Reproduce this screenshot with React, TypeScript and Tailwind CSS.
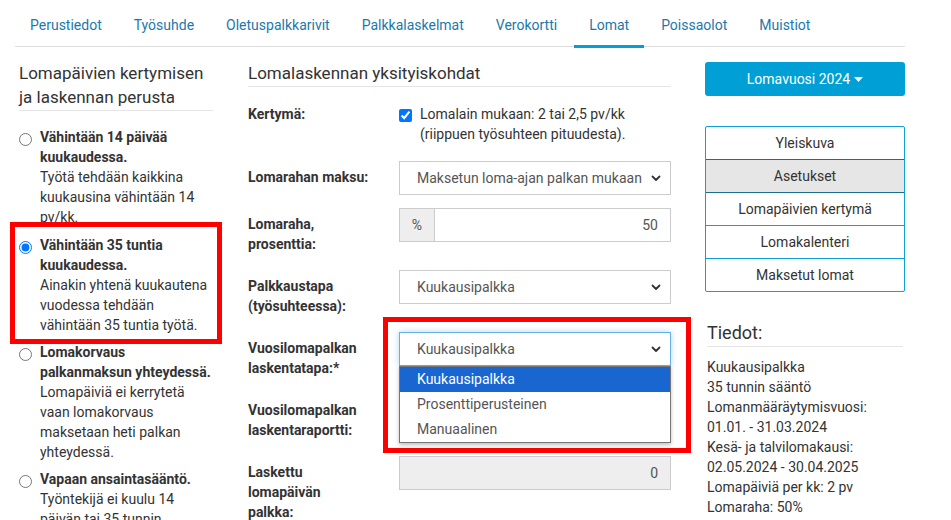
import React from "react";

const tabs = ["Perustiedot", "Työsuhde", "Oletuspalkkarivit", "Palkkalaskelmat", "Verokortti", "Lomat", "Poissaolot", "Muistiot"];

function Chevron() {
  return (
    <svg width="10" height="7" viewBox="0 0 10 7" className="shrink-0">
      <path d="M1.5 1.5 L5 5 L8.5 1.5" fill="none" stroke="#333" strokeWidth="1.8" strokeLinecap="round" strokeLinejoin="round" />
    </svg>
  );
}

function SelectBox({ value, focus }: { value: string; focus?: boolean }) {
  return (
    <div
      className={
        "h-[34px] w-full flex items-center justify-between pl-[17px] pr-[9px] bg-white text-[14px] text-[#555] border " +
        (focus ? "border-[#66afe9] shadow-[0_0_6px_rgba(102,175,233,0.5)]" : "border-[#ccc]")
      }
    >
      <span>{value}</span>
      <Chevron />
    </div>
  );
}

function Radio({ checked, title, lines }: { checked?: boolean; title: string[]; lines: string[] }) {
  return (
    <div className="flex items-start gap-2 mb-[7px]">
      <input type="radio" checked={!!checked} readOnly className="m-0 mt-[6px] w-[13px] h-[13px] shrink-0" />
      <div className="text-[14px] leading-[20px] text-[#333] whitespace-nowrap">
        {title.map((t) => (
          <div key={t} className="font-bold">{t}</div>
        ))}
        {lines.map((t) => (
          <div key={t}>{t}</div>
        ))}
      </div>
    </div>
  );
}

function Row({ label, children, mb }: { label: string[]; children: React.ReactNode; mb: string }) {
  return (
    <div className={"flex items-start " + mb}>
      <div className="w-[151px] shrink-0 pt-[6px] text-[14px] leading-[20px] font-bold text-[#333]">
        {label.map((l) => (
          <div key={l}>{l}</div>
        ))}
      </div>
      <div className="flex-1 relative">{children}</div>
    </div>
  );
}

export default function App() {
  return (
    <div className="w-[951px] h-[520px] overflow-hidden bg-white relative" style={{ fontFamily: "Roboto, 'Liberation Sans', sans-serif" }}>
      <div className="px-[15px]">
        <ul className="flex w-[890px] h-[47px] border-b border-[#ddd]">
          {tabs.map((t) => (
            <li key={t} className="relative mr-[2px] px-[15px] pt-[15px] text-[14px] leading-[20px] text-[#1b78ad]">
              {t}
              {t === "Lomat" && <span className="absolute left-0 right-0 bottom-[-2px] h-[3px] bg-[#00a0d6]" />}
            </li>
          ))}
        </ul>
      </div>

      <div className="flex items-start mt-[14px] pl-[19px]">
        {/* Left column */}
        <div className="w-[194px] shrink-0 mr-[35px]">
          <h3 className="text-[17px] leading-[24px] text-[#333] pb-[1px] border-b border-[#e5e5e5]">
            Lomapäivien kertymisen
            <br />
            ja laskennan perusta
          </h3>
          <div className="mt-[16px]">
            <Radio title={["Vähintään 14 päivää", "kuukaudessa."]} lines={["Työtä tehdään kaikkina", "kuukausina vähintään 14", "pv/kk."]} />
            <div className="h-[1px]" />
            <Radio checked title={["Vähintään 35 tuntia", "kuukaudessa."]} lines={["Ainakin yhtenä kuukautena", "vuodessa tehdään", "vähintään 35 tuntia työtä."]} />
            <Radio title={["Lomakorvaus", "palkanmaksun yhteydessä."]} lines={["Lomapäiviä ei kerrytetä", "vaan lomakorvaus", "maksetaan heti palkan", "yhteydessä."]} />
            <Radio title={["Vapaan ansaintasääntö."]} lines={["Työntekijä ei kuulu 14", "päivän tai 35 tunnin"]} />
          </div>
        </div>

        {/* Middle column */}
        <div className="w-[423px] shrink-0 mr-[34px]">
          <h3 className="text-[17px] leading-[24px] text-[#333] pb-[1px] border-b border-[#e5e5e5]">Lomalaskennan yksityiskohdat</h3>
          <div className="mt-[17px]">
            <div className="flex items-start mb-[17px]">
              <div className="w-[151px] shrink-0 text-[14px] leading-[20px] font-bold text-[#333]">Kertymä:</div>
              <div className="flex items-start gap-[8px]">
                <input type="checkbox" checked readOnly className="m-0 mt-[5px] w-[13px] h-[13px] shrink-0" />
                <div className="text-[14px] leading-[20px] text-[#333]">
                  Lomalain mukaan: 2 tai 2,5 pv/kk
                  <br />
                  (riippuen työsuhteen pituudesta).
                </div>
              </div>
            </div>

            <Row label={["Lomarahan maksu:"]} mb="mb-[13px]">
              <SelectBox value="Maksetun loma-ajan palkan mukaan" />
            </Row>

            <Row label={["Lomaraha,", "prosenttia:"]} mb="mb-[16px]">
              <div className="flex h-[34px] border border-[#ccc] text-[14px]">
                <div className="w-[35px] shrink-0 bg-[#eee] border-r border-[#ccc] flex items-center justify-center text-[#555]">%</div>
                <div className="flex-1 flex items-center justify-end pr-[12px] text-[#555]">50</div>
              </div>
            </Row>

            <Row label={["Palkkaustapa", "(työsuhteessa):"]} mb="mb-[16px]">
              <SelectBox value="Kuukausipalkka" />
            </Row>

            <Row label={["Vuosilomapalkan", "laskentatapa:*"]} mb="mb-[16px]">
              <SelectBox value="Kuukausipalkka" focus />
              <div className="absolute left-0 right-0 top-[34px] z-10 bg-white border border-[#767676] shadow-[0_2px_4px_rgba(0,0,0,0.25)] text-[14px]">
                <div className="h-[25px] flex items-center pl-[17px] bg-[#1a66d1] text-white">Kuukausipalkka</div>
                <div className="h-[25px] flex items-center pl-[17px] text-[#555]">Prosenttiperusteinen</div>
                <div className="h-[25px] flex items-center pl-[17px] text-[#555]">Manuaalinen</div>
              </div>
            </Row>

            <Row label={["Vuosilomapalkan", "laskentaraportti:"]} mb="mb-[16px]">
              <SelectBox value="" />
            </Row>

            <Row label={["Laskettu", "lomapäivän", "palkka:"]} mb="mb-0">
              <div className="h-[34px] flex items-center justify-end pr-[12px] bg-[#eee] border border-[#ccc] text-[14px] text-[#555]">0</div>
            </Row>
          </div>
        </div>

        {/* Right column */}
        <div className="w-[200px] shrink-0 mt-[1px]">
          <div className="h-[34px] rounded-[3px] bg-[#00a0d6] text-white text-[14px] flex items-center justify-center gap-[4px]">
            Lomavuosi 2024
            <svg width="9" height="5" viewBox="0 0 9 5">
              <path d="M0 0 L9 0 L4.5 5 Z" fill="#fff" />
            </svg>
          </div>

          <div className="mt-[30px] border border-[#0ea0d6] rounded-[2px] text-[14px] text-[#333]">
            <div className="h-[32px] flex items-center justify-center">Yleiskuva</div>
            <div className="h-[33px] flex items-center justify-center bg-[#e6e6e6] border-t border-[#1a6e92]">Asetukset</div>
            <div className="h-[33px] flex items-center justify-center border-t border-[#1a6e92]">Lomapäivien kertymä</div>
            <div className="h-[33px] flex items-center justify-center border-t border-[#0ea0d6]">Lomakalenteri</div>
            <div className="h-[33px] flex items-center justify-center border-t border-[#0ea0d6]">Maksetut lomat</div>
          </div>

          <div className="pl-[2px] mt-[29px]">
            <h3 className="text-[18px] leading-[24px] text-[#333] pb-[1px] border-b border-[#e5e5e5] mr-[2px]">Tiedot:</h3>
            <div className="mt-[10px] text-[14px] leading-[20px] text-[#333]">
              <div>Kuukausipalkka</div>
              <div>35 tunnin sääntö</div>
              <div>Lomanmääräytymisvuosi:</div>
              <div>01.01. - 31.03.2024</div>
              <div>Kesä- ja talvilomakausi:</div>
              <div>02.05.2024 - 30.04.2025</div>
              <div>Lomapäiviä per kk: 2 pv</div>
              <div>Lomaraha: 50%</div>
            </div>
          </div>
        </div>
      </div>

      {/* Red annotation boxes */}
      <div className="absolute left-[10px] top-[222px] w-[212px] h-[122px] border-[5px] border-[#ff0000] pointer-events-none" />
      <div className="absolute left-[383px] top-[317px] w-[308px] h-[136px] border-[5px] border-[#ff0000] pointer-events-none" />
    </div>
  );
}
